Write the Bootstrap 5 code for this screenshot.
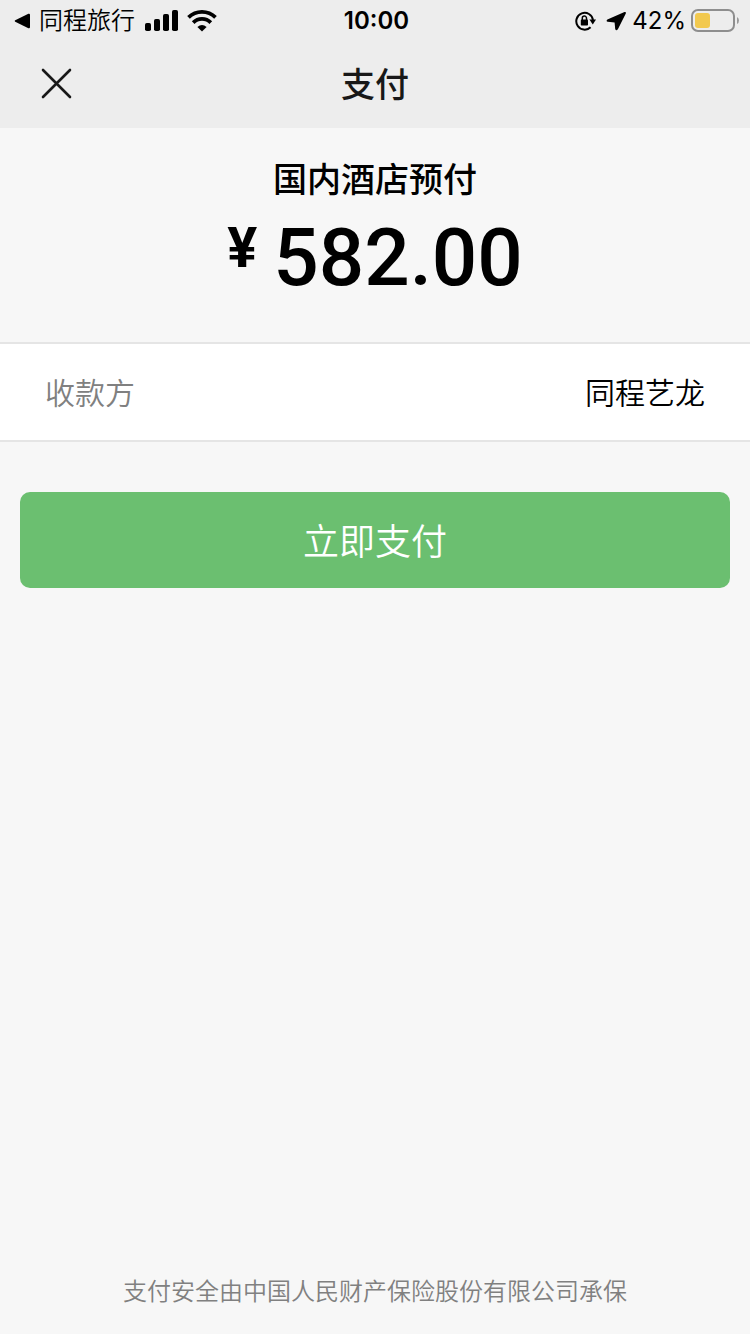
<!DOCTYPE html>
<html lang="zh-CN">
<head>
<meta charset="utf-8">
<meta name="viewport" content="width=device-width, initial-scale=1">
<title>支付</title>
<link href="https://cdn.jsdelivr.net/npm/bootstrap@5.3.0/dist/css/bootstrap.min.css" rel="stylesheet">
<style>
  body { background: #f7f7f7; color: #000; font-family: "Noto Sans CJK SC", sans-serif; }
  .top-area { background: #ededed; padding-bottom: 4px; }
  .status-line { height: 42px; padding: 0 11px 0 14px; font: 24px/40px Inter, "Noto Sans CJK SC", sans-serif; }
  .back-link { font-weight: 350; }
  .side { flex: 1 1 0; }
  .clock { font-weight: 600; }
  .back-link { gap: 8px; }
  .signal { margin-left: 10px; }
  .title-line { height: 82px; padding: 0 40px; color: #181818; }
  .title-line h1 { font-size: 34px; line-height: 40px; font-weight: 500; }
  .close-btn { width: 33px; height: 33px; color: #181818; }
  .summary { padding: 30px 0 36px; }
  .summary h2 { font-size: 34px; line-height: 40px; font-weight: 500; }
  .amount { font-family: Roboto, sans-serif; font-weight: 500; font-size: 80px; line-height: 96px; gap: 16px; padding-top: 12px; }
  .currency { font-size: 56px; line-height: 76px; font-weight: 700; }
  .payee { background: #fff; border: solid #e5e5e5; border-width: 2px 0; padding: 27px 45px 29px; font-size: 30px; line-height: 40px; }
  .payee dt, .payee dd { font-weight: 350; }
  .payee dt { color: #808080; }
  .action { padding: 50px 20px; }
  .pay-btn { --bs-btn-color: #fff; --bs-btn-bg: #6bbf70; --bs-btn-hover-color: #fff; --bs-btn-hover-bg: #5fb364; --bs-btn-active-color: #fff; --bs-btn-active-bg: #55a65a; border: 0; border-radius: 10px; padding: 23px 24px 25px; font-size: 36px; line-height: 48px; font-weight: 350; }
  .insurer { color: #808080; font-size: 24px; line-height: 32px; padding-bottom: 28px; font-weight: 350; }
</style>
</head>
<body class="d-flex flex-column min-vh-100">
<header class="top-area">
  <div class="status-line d-flex align-items-center">
    <div class="side d-flex align-items-center">
      <a href="#" class="back-link d-flex align-items-center text-reset text-decoration-none">
        <svg width="17" height="16" viewBox="0 0 17 16" aria-hidden="true"><path d="M1.2 7.2 14.4.8Q16 .2 16 2V14Q16 15.8 14.4 15.2L1.2 8.8Q0 8 1.2 7.2Z"/></svg>
        <span>同程旅行</span>
      </a>
      <svg class="signal" width="34" height="22" viewBox="0 0 34 22" aria-hidden="true"><rect y="13" width="6" height="8" rx="1.8"/><rect x="9" y="9" width="6" height="12" rx="1.8"/><rect x="18" y="4" width="6" height="17" rx="1.8"/><rect x="27" y="0" width="6" height="21" rx="1.8"/></svg>
      <svg class="ms-2" width="30" height="22" viewBox="0 0 30 22" aria-hidden="true"><g fill="none" stroke="#000" stroke-width="3.8"><path d="M1.5 7.4a19.4 19.4 0 0 1 27 0"/><path d="M6.2 12.6a12.4 12.4 0 0 1 17.6 0"/></g><path d="M15 21.4 10.4 17Q15 13 19.6 17Z"/></svg>
    </div>
    <div class="clock">10:00</div>
    <div class="side d-flex align-items-center justify-content-end">
      <svg width="21" height="20" viewBox="0 0 21 20" aria-hidden="true"><path d="M15.6 16.2A8.4 8.4 0 1 1 18 9" fill="none" stroke="#000" stroke-width="2"/><path d="M14.4 8.6h6.6l-3.2 4.8z"/><rect x="5.8" y="8.6" width="7.2" height="6" rx=".8"/><path d="M7.3 9V7.2a2.1 2.1 0 0 1 4.2 0V9" fill="none" stroke="#000" stroke-width="1.5"/></svg>
      <svg class="ms-2 me-1" width="24" height="20" viewBox="0 0 24 20" aria-hidden="true"><path d="M20.5 1.1 3.4 8.4Q1.6 9.9 3.8 10.8L10.6 11.6 11.2 18Q12.2 20.4 14 18L21.8 2.6Q22.3.6 20.5 1.1Z"/></svg>
      <span>42%</span>
      <svg class="ms-1" width="49" height="24" viewBox="0 0 49 24" aria-hidden="true"><rect x="2" y="1" width="42" height="21" rx="6" fill="none" stroke="#8e8e8e" stroke-width="2"/><rect x="5" y="4" width="15" height="15" rx="3" fill="#f2c94f"/><path d="M47 8q2 1 2 3.5t-2 3.5z" fill="#999"/></svg>
    </div>
  </div>
  <div class="title-line d-flex align-items-center">
    <div class="side d-flex">
      <button type="button" class="close-btn btn p-0 border-0 d-flex" aria-label="关闭">
        <svg width="33" height="33" viewBox="0 0 33 33" aria-hidden="true"><path d="M3 3 30 30M30 3 3 30" stroke="currentColor" stroke-width="2.6" stroke-linecap="round"/></svg>
      </button>
    </div>
    <h1 class="m-0">支付</h1>
    <div class="side"></div>
  </div>
</header>
<main class="flex-grow-1">
  <section class="summary text-center">
    <h2 class="m-0">国内酒店预付</h2>
    <div class="amount d-flex justify-content-center align-items-start"><span class="currency">¥</span><span>582.00</span></div>
  </section>
  <dl class="payee d-flex justify-content-between m-0">
    <dt>收款方</dt>
    <dd class="m-0">同程艺龙</dd>
  </dl>
  <div class="action">
    <button type="button" class="pay-btn btn w-100">立即支付</button>
  </div>
</main>
<footer class="insurer text-center">支付安全由中国人民财产保险股份有限公司承保</footer>
<script src="https://cdn.jsdelivr.net/npm/bootstrap@5.3.0/dist/js/bootstrap.bundle.min.js"></script>
</body>
</html>
